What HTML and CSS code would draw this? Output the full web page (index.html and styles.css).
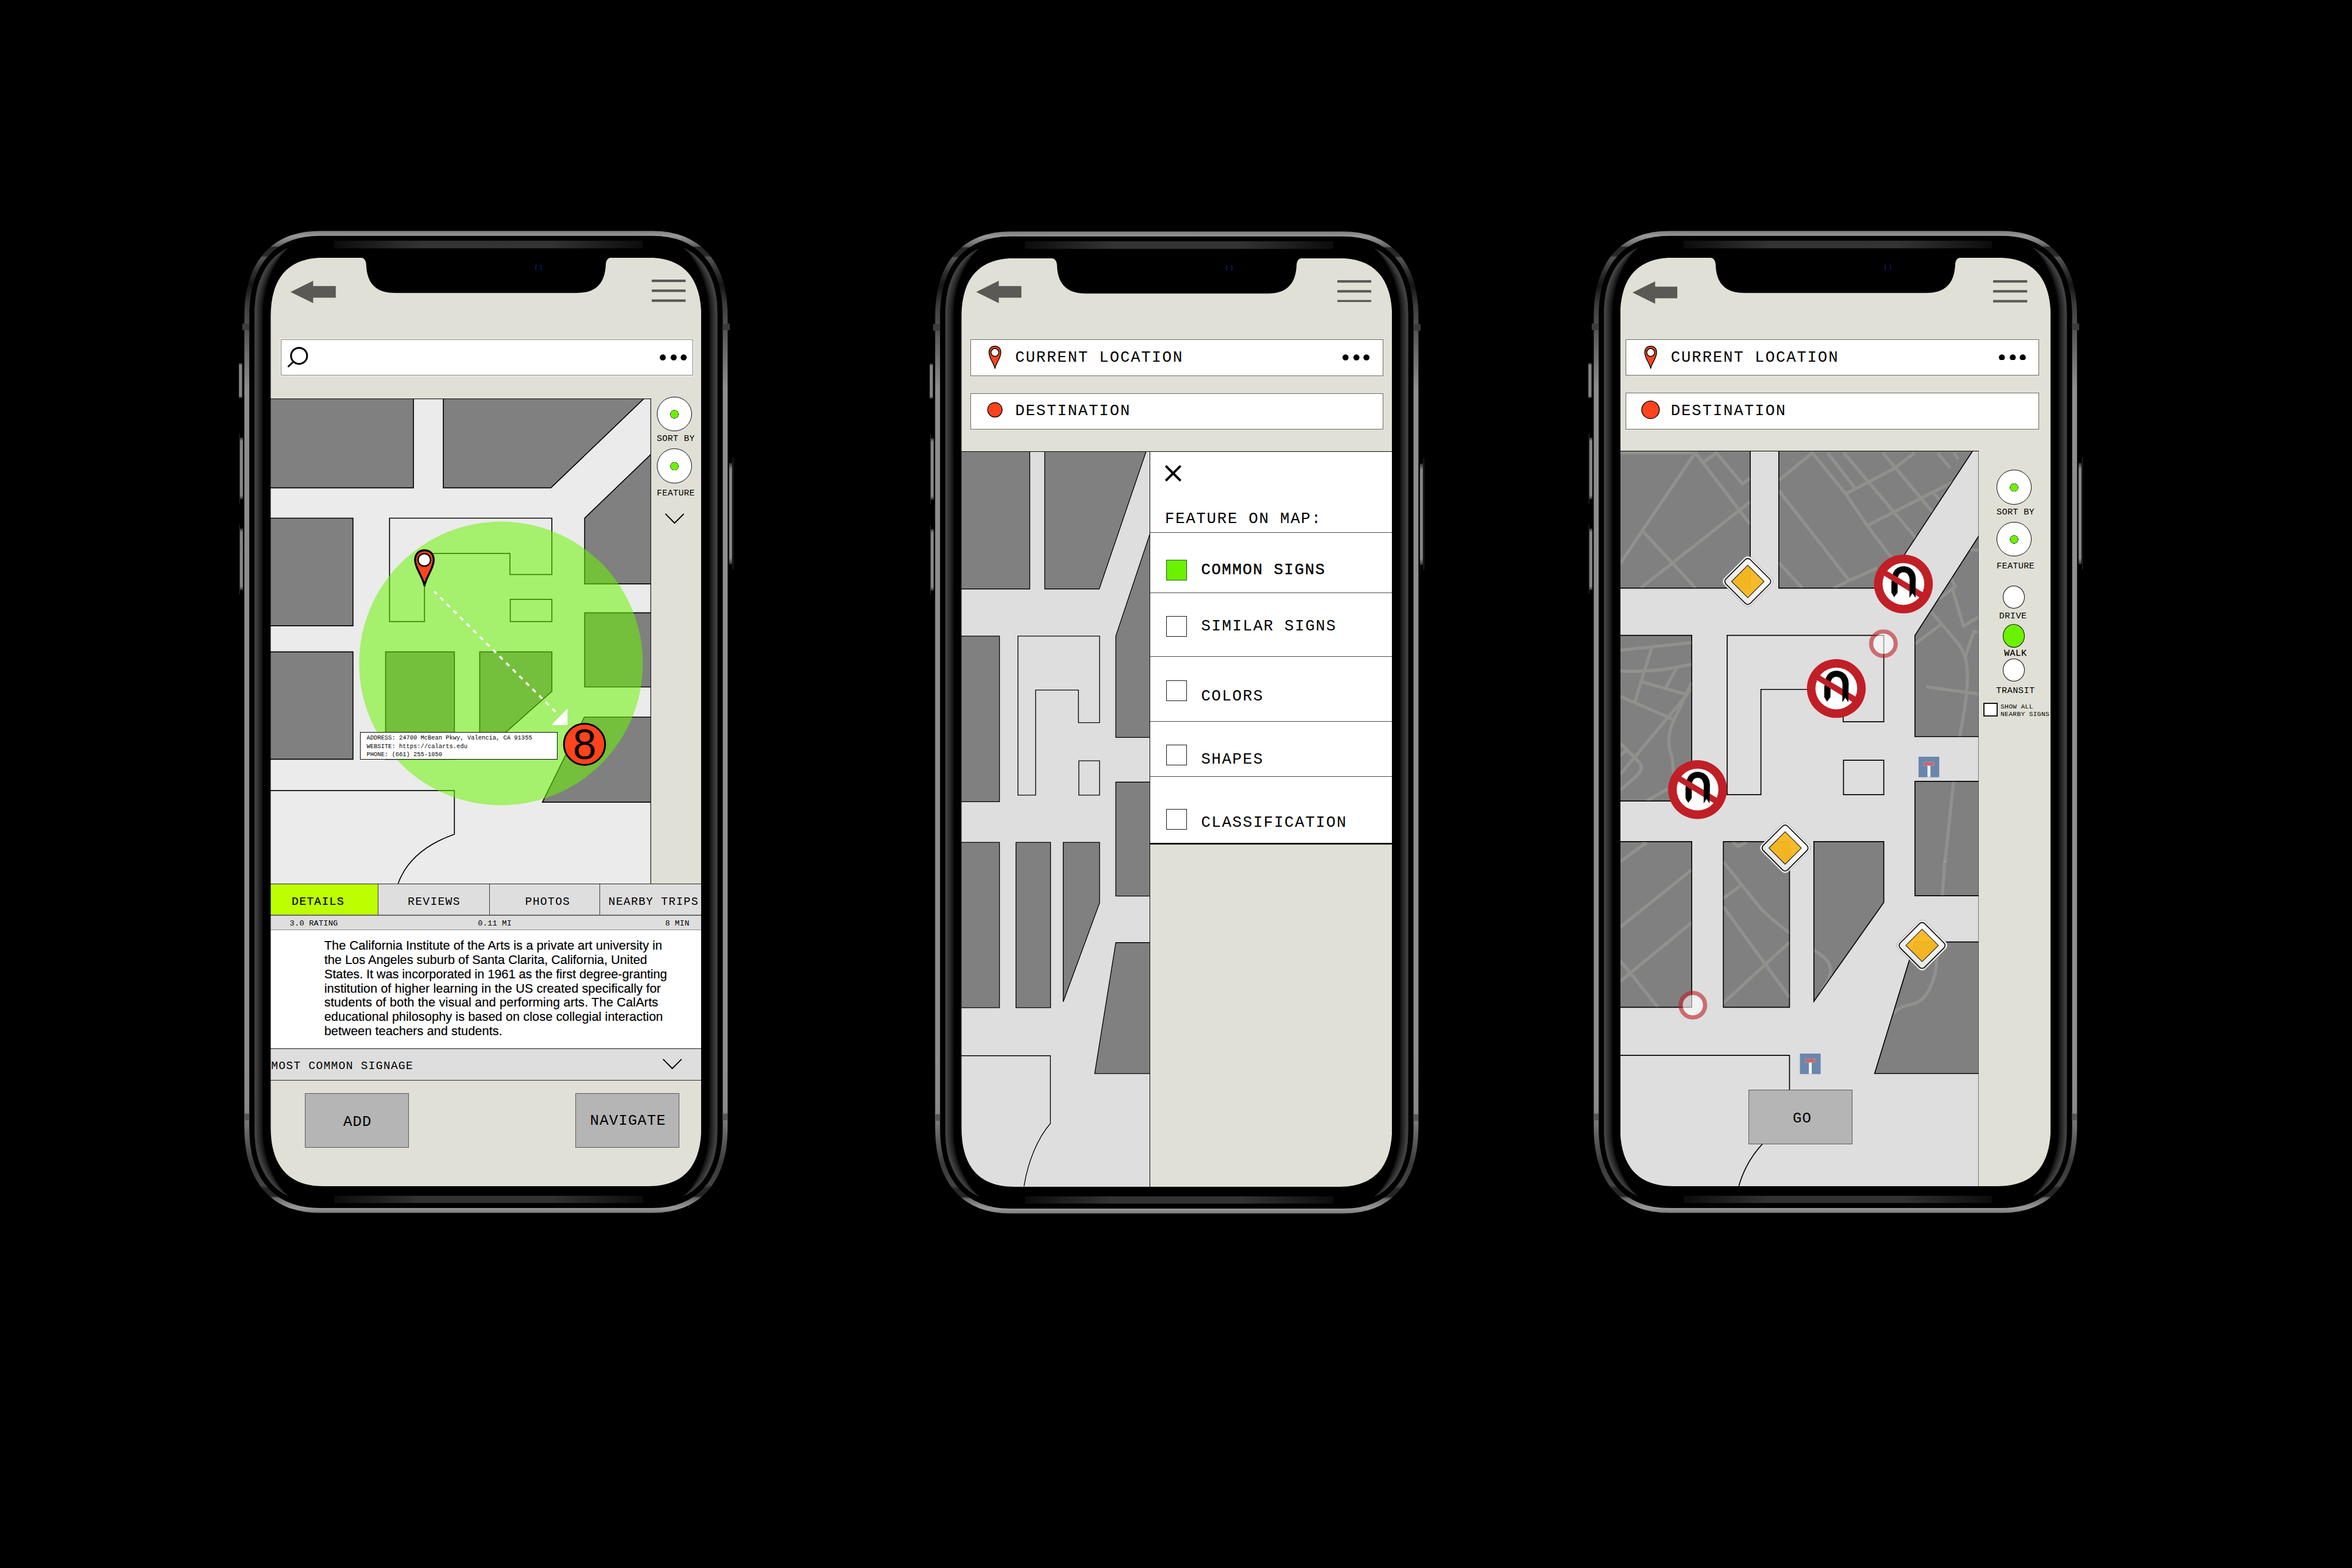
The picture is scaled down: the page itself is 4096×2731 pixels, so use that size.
FILE: index.html
```html
<!DOCTYPE html>
<html lang="en">
<head>
<meta charset="utf-8">
<title>Sign navigation app</title>
<link rel="stylesheet" href="styles.css">
</head>
<body>

<svg class="sprite" aria-hidden="true">
  <defs>
    <linearGradient id="g-rim" gradientUnits="userSpaceOnUse" x1="0" y1="-68" x2="0" y2="2437">
      <stop offset="0" stop-color="#7c7c7c"/><stop offset=".005" stop-color="#999"/>
      <stop offset=".012" stop-color="#777"/><stop offset=".0155" stop-color="#5c5c5c"/>
      <stop offset=".0165" stop-color="#262626"/><stop offset=".025" stop-color="#2a2a2a"/>
      <stop offset=".027" stop-color="#555"/><stop offset=".042" stop-color="#2e2e2e"/>
      <stop offset=".055" stop-color="#151515"/><stop offset=".075" stop-color="#3c3c3c"/>
      <stop offset=".16" stop-color="#8e8e8e"/><stop offset=".84" stop-color="#8e8e8e"/>
      <stop offset=".895" stop-color="#8a8a8a"/><stop offset=".93" stop-color="#555"/>
      <stop offset=".95" stop-color="#3a3a3a"/><stop offset=".972" stop-color="#444"/>
      <stop offset=".975" stop-color="#262626"/><stop offset=".983" stop-color="#262626"/>
      <stop offset=".985" stop-color="#6c6c6c"/><stop offset=".995" stop-color="#999"/>
      <stop offset="1" stop-color="#7c7c7c"/>
    </linearGradient>
    <linearGradient id="g-bar"><stop offset="0" stop-color="#0c0c0c"/><stop offset=".28" stop-color="#333"/><stop offset=".7" stop-color="#333"/><stop offset="1" stop-color="#0c0c0c"/></linearGradient>
    <linearGradient id="g-key" x2="0" y2="1"><stop offset="0" stop-color="#333"/><stop offset=".06" stop-color="#858585"/><stop offset=".94" stop-color="#858585"/><stop offset="1" stop-color="#333"/></linearGradient>
    <linearGradient id="g-sign" x2="0" y2="1"><stop offset="0" stop-color="#fff"/><stop offset="1" stop-color="#ececec"/></linearGradient>

    <g id="edge">
      <path fill="#101010" d="M45-25C-10 0-41 60-41 140V2229C-41 2309-10 2369 45 2394C6 2359-20 2289-20 2229V140C-20 80 6 10 45-25Z"/>
      <path fill="#1c1c1c" d="M45-25C-10 0-41 60-41 140V2229C-41 2309-10 2369 45 2394C3 2360-23 2290-23 2229V140C-23 79 3 9 45-25Z"/>
      <path fill="#292929" d="M45-25C-10 0-41 60-41 140V2229C-41 2309-10 2369 45 2394C0 2361-27 2292-27 2229V140C-27 77 0 8 45-25Z"/>
      <path fill="#343434" d="M45-25C-10 0-41 60-41 140V2229C-41 2309-10 2369 45 2394C-3 2362-31 2295-31 2229V140C-31 74-3 7 45-25Z"/>
      <path fill="#404040" d="M45-25C-10 0-41 60-41 140V2229C-41 2309-10 2369 45 2394C-6 2366-35 2300-35 2229V140C-35 69-6 3 45-25Z"/>
    </g>
    <g id="frame">
      <path fill-rule="evenodd" fill="#000" d="M-30-30H1128V2399H-30ZM0 150C0 55 42 0 135 0H228C238 0 243 7 243.600 17C245 62 265 90 318 90H780.400C833 90 853 62 854.800 17C855.400 7 860 0 870 0H963.400C1056 0 1098.400 55 1098.400 150V2219C1098.400 2314 1056 2369 963.400 2369H135C42 2369 0 2314 0 2219Z"/>
      <use href="#edge"/>
      <use href="#edge" transform="translate(1098.400) scale(-1 1)"/>
      <path fill="none" stroke="url(#g-rim)" stroke-width="12.500" d="M-61 150C-61 10 10-62 125-62H973.400C1088-62 1159.400 10 1159.400 150V2219C1159.400 2359 1088 2431 973.400 2431H125C10 2431-61 2359-61 2219Z"/>
      <path fill="url(#g-bar)" d="M162-43.400H949V-24H162ZM162 2393.500H949V2412H162Z"/>
      <path fill="#3c3c3c" d="M-72.500 168H-54.500V185H-72.500ZM1153 168H1171V185H1153Z"/>
      <path fill="#565656" d="M-67.200 2184H-54.500V2201H-67.200ZM1153 2184H1165.600V2201H1153Z"/>
      <g fill="url(#g-key)">
        <path d="M-81 269H-73V358H-81Z"/><path d="M-78.500 459H-71V616H-78.500Z"/><path d="M-78.500 691H-71V848H-78.500Z"/><path d="M1169.500 524H1177V782H1169.500Z"/>
      </g>
      <path fill="#444" d="M-80 449h1.200V626h-1.200ZM-80 681h1.200V858h-1.200ZM1179 510h1.200V795h-1.200Z"/>
      <path fill="none" stroke="#02206b" stroke-width="2.500" d="M678 18Q674 24 677 31M688 18Q692 24 689 31"/>
    </g>

    <g id="i-arrow" fill="#5a5955"><path d="M0 28.500L57.700 0V13.500H115.400V43.200H57.700V57Z"/></g>
    <g id="i-menu" fill="#5a5955"><path d="M0 0H87V6.200H0ZM0 25.200H87V31.400H0ZM0 50.400H87V56.600H0Z"/></g>
    <g id="i-dots"><circle cx="7.700" cy="8" r="7.700"/><circle cx="35.500" cy="8" r="7.700"/><circle cx="61" cy="8" r="7.700"/></g>
    <g id="i-pin"><path fill="#ff431d" stroke="#000" stroke-width="2.200" stroke-linejoin="round" d="M17 58C14 44 2 32 2 17.500C2 7 8 1.500 17 1.500S32 7 32 17.500C32 32 20 44 17 58Z"/><circle cx="17" cy="17.500" r="10" fill="#fff" stroke="#000" stroke-width="2.200"/></g>
    <g id="i-chevron"><path fill="none" stroke="#000" stroke-width="3" stroke-linecap="round" d="M2 2L24.500 25L47.500 2"/></g>

    <g id="s-uturn">
      <circle r="75" fill="#c01f26"/><circle r="53.300" fill="#fff"/>
      <path d="M-30.700 22.300V-5C-29-10-28-14-28-20C-26-36-14-45.300 0-45.300C19-45.300 31.300-31 31.300-14L30.500 34.700L23 23.300L15.600 34.700L16-8C16-20 11-30 0-30C-9-30-14.500-22-14.500-12L-15 22.300L-23.700 33.700Z"/>
      <path fill="#c01f26" d="M-43-34L51 22L43 35.600L-51-22Z"/>
      <path d="M31.300-14L30.500 34.700L23 23.300L15.600 34.700L16-8Z"/>
    </g>
    <g id="s-priority" opacity=".95">
      <rect x="-49" y="-49" width="98" height="98" rx="12" transform="rotate(45)" fill="url(#g-sign)" stroke="#888" stroke-width="1"/>
      <rect x="-44" y="-44" width="88" height="88" rx="9" transform="rotate(45)" fill="none" stroke="#111" stroke-width="2.800"/>
      <path d="M0-41.500L41.500 0L0 41.500L-41.500 0Z" fill="#f9b91f" stroke="#222" stroke-width="1.800"/>
    </g>
    <g id="s-ring"><circle r="26" fill="#fff" fill-opacity=".6"/><circle r="31.300" fill="none" stroke="#c01f26" stroke-opacity=".6" stroke-width="10.600"/></g>
    <g id="s-deadend"><path fill="#6987ad" d="M0 0H52.800V52.600H0Z"/><path fill="#f1f3f6" d="M22.700 22H30.200V52H22.700Z"/><path fill="#cc666c" stroke="#a9a0b4" stroke-width="1" d="M13.600 13.400H40V22.800H13.600Z"/></g>
  </defs>
</svg>

<main class="board">

  <section class="phone">
    <header class="topbar">
      <svg class="ic-arrow" viewBox="0 0 115.400 57"><use href="#i-arrow"/></svg>
      <svg class="ic-menu" viewBox="0 0 87 56.600"><use href="#i-menu"/></svg>
    </header>
    <div class="search">
      <svg class="ic-search" viewBox="0 0 54 54"><circle cx="30.500" cy="23.200" r="20.500" fill="none" stroke="#000" stroke-width="4.600"/><path d="M15.500 38.500L3.500 50" stroke="#000" stroke-width="4.400" stroke-linecap="round"/></svg>
      <svg class="ic-dots" viewBox="0 0 69 16"><use href="#i-dots"/></svg>
    </div>
    <div class="explore">
      <div class="map-area">
        <svg class="map map-place" viewBox="0 358.600 971 1237.400">
          <g class="blocks">
            <path d="M-5 350H364.700V586.600H-5ZM441 350H962.300L953.300 358.600L715.400 586.600H441ZM980 492L801.600 664V831.600H980ZM-5 664H210.500V938.500H-5ZM-5 1005.300H210.500V1279H-5ZM293.800 1005.300H469.200V1279H293.800ZM533.800 1005.300H717.900V1106L601.800 1209L533.800 1269ZM801.600 905.400H980V1094.700H801.600ZM800.800 1171.600H980V1388.500H693.800Z"/>
          </g>
          <g class="lots">
            <path d="M303.800 664H717.900V807.900H610.900V753.800H392.900V927.900H303.800ZM611.700 871H717.900V927.900H611.700Z"/>
            <path d="M-5 1359H469.200V1470.400C400 1495 348 1535 325.700 1596"/>
          </g>
          <path fill="none" stroke="#222" stroke-width="2" d="M0 359.400H970.300V1596"/>
          <circle cx="588.100" cy="1034.700" r="361.900" fill="#69f401" fill-opacity=".54"/>
          <path d="M417.800 851L735 1166" stroke="#fff" stroke-width="5.500" stroke-dasharray="11 12.700" stroke-dashoffset="2"/>
          <path fill="#fff" d="M757.700 1149.700V1192H716.200Z"/>
          <path fill="#ff431d" stroke="#000" stroke-width="5" stroke-linejoin="round" d="M392.900 836C388 812 369 792 369 771C369 754 380 746 392.900 746S416.500 754 416.500 771C416.500 792 398 812 392.900 836Z"/>
          <circle cx="392.500" cy="770.400" r="16" fill="#fff" stroke="#000" stroke-width="3.500"/>
          <circle cx="801.200" cy="1241" r="52.500" fill="#ff431d" stroke="#000" stroke-width="4.500"/>
          <text class="badge-number" x="801.600" y="1279">8</text>
        </svg>
        <div class="place-card">ADDRESS: 24700 McBean Pkwy, Valencia, CA 91355<br>WEBSITE: https://calarts.edu<br>PHONE: (661) 255-1050</div>
      </div>
      <aside class="rail rail-place">
        <i class="knob"></i><span class="rail-label">SORT BY</span>
        <i class="knob"></i><span class="rail-label">FEATURE</span>
        <svg class="ic-chevron" viewBox="0 0 49.500 27"><use href="#i-chevron"/></svg>
      </aside>
    </div>
    <nav class="tabs">
      <a class="tab tab-active">DETAILS</a><a class="tab tab-reviews">REVIEWS</a><a class="tab tab-photos">PHOTOS</a><a class="tab tab-trips">NEARBY TRIPS</a>
    </nav>
    <div class="meta"><span>3.0 RATING</span><span>0.11 MI</span><span>8 MIN</span></div>
    <p class="about">
      <span>The California Institute of the Arts is a private art university in</span>
      <span class="snug">the Los Angeles suburb of Santa Clarita, California, United</span>
      <span class="tight">States. It was incorporated in 1961 as the first degree-granting</span>
      <span>institution of higher learning in the US created specifically for</span>
      <span class="loose">students of both the visual and performing arts. The CalArts</span>
      <span>educational philosophy is based on close collegial interaction</span>
      <span>between teachers and students.</span>
    </p>
    <div class="signage">MOST COMMON SIGNAGE<svg class="ic-chevron" viewBox="0 0 49.500 27"><use href="#i-chevron"/></svg></div>
    <div class="actions"><button class="btn">ADD</button><button class="btn btn-nav">NAVIGATE</button></div>
    <svg class="frame" viewBox="-90 -70 1280 2510"><use href="#frame"/></svg>
  </section>

  <section class="phone phone-filter">
    <header class="topbar">
      <svg class="ic-arrow" viewBox="0 0 115.400 57"><use href="#i-arrow"/></svg>
      <svg class="ic-menu" viewBox="0 0 87 56.600"><use href="#i-menu"/></svg>
    </header>
    <div class="field"><svg class="field-icon" viewBox="0 0 40 60"><use href="#i-pin" x="3"/></svg>CURRENT LOCATION<svg class="ic-dots" viewBox="0 0 69 16"><use href="#i-dots"/></svg></div>
    <div class="field"><svg class="field-icon" viewBox="0 0 40 60"><circle cx="20" cy="27.500" r="18.400" fill="#ff431d" stroke="#000" stroke-width="2"/></svg>DESTINATION</div>
    <div class="filter-body">
      <svg class="map map-filter" viewBox="0 492 480 1877">
        <g class="blocks">
          <path d="M-5 480H174.800V842.200H-5ZM213 480H475.700L352.200 842.200H213ZM485 691.500L394.500 962.700V1221.600H485ZM-5 962.700H97.300V1385.800H-5ZM394.500 1335.800H485V1626.800H394.500ZM-5 1489.600H97.300V1912H-5ZM139.600 1489.600H227.800V1912H139.600ZM260.200 1489.600H353V1644.500L260.200 1896.800ZM394.500 1745.700H485V2080.400H340.600Z"/>
        </g>
        <g class="lots">
          <path d="M144.500 962.700H353V1183.700H299V1100.500H189.700V1369H144.500ZM300 1281.300H353V1369H300Z"/>
          <path d="M-5 2034.700H227.400V2207.700C195 2245 170 2305 159.900 2369"/>
        </g>
      </svg>
      <div class="filter-panel">
        <div class="filter-head">
          <svg class="ic-close" viewBox="0 0 50 50"><path d="M4 4L46 46M46 4L4 46" stroke="#000" stroke-width="6.500"/></svg>
          <h2>FEATURE ON MAP:</h2>
        </div>
        <label class="option option-on"><i class="box"></i><span>COMMON SIGNS</span></label>
        <label class="option option-similar"><i class="box"></i><span>SIMILAR SIGNS</span></label>
        <label class="option option-colors"><i class="box"></i><span>COLORS</span></label>
        <label class="option option-shapes"><i class="box"></i><span>SHAPES</span></label>
        <label class="option option-class"><i class="box"></i><span>CLASSIFICATION</span></label>
      </div>
    </div>
    <svg class="frame" viewBox="-90 -70 1280 2510"><use href="#frame"/></svg>
  </section>

  <section class="phone phone-route">
    <header class="topbar">
      <svg class="ic-arrow" viewBox="0 0 115.400 57"><use href="#i-arrow"/></svg>
      <svg class="ic-menu" viewBox="0 0 87 56.600"><use href="#i-menu"/></svg>
    </header>
    <div class="field"><svg class="field-icon" viewBox="0 0 40 60"><use href="#i-pin" x="3"/></svg>CURRENT LOCATION<svg class="ic-dots" viewBox="0 0 69 16"><use href="#i-dots"/></svg></div>
    <div class="field"><svg class="field-icon field-icon-wide" viewBox="0 0 48 60"><circle cx="24" cy="27.500" r="22.500" fill="#ff431d" stroke="#000" stroke-width="2"/></svg>DESTINATION</div>
    <div class="route-body">
      <div class="map-area">
        <svg class="map map-route" viewBox="0 493 915 1876">
          <defs>
            <path id="city" d="M-5 493H331V843.600H-5ZM404 493H898.900L725.700 756.500L668.500 843.600H404ZM920 701.500L751.300 964.200V1222.500H920ZM-5 964.200H181.800V1386.600H-5ZM751.300 1336.700H920V1628.400H751.300ZM-5 1490.500H181.800V1913H-5ZM262.600 1490.500H431.300V1913H262.600ZM493.500 1490.500H671.800V1645.500L493.500 1897.800ZM751.300 1746.400H920V2082H648.500Z"/>
            <clipPath id="city-clip"><use href="#city"/></clipPath>
          </defs>
          <g class="blocks"><use href="#city"/></g>
          <g clip-path="url(#city-clip)" class="roads">
            <g transform="translate(-103.400 -88.400) scale(.829 .574)">
              <path d="M124 1022H355L192 1368L124 1515M192 1368L356 1624M355 1022L524 1340M524 1240L187 1623M377 1068L420 1022L500 1160L524 1135"/>
              <path d="M612 1145L715 1022L818 1205L885 1348L965 1500M818 1205L970 1090L1030 1022M762 1022L848 1182M812 1022L1045 1420M932 1022L1085 1285M885 1345L1150 1150M1100 1022L1140 1090M1085 1195L1105 1230M1150 1022L1165 1050M612 1190L829 1590L915 1535M829 1590L780 1624M612 1510L685 1624"/>
            </g>
            <g transform="translate(-103.400 641.600) scale(.829 .574)">
              <path d="M124 628L344 594M222 612L169 858M124 720Q230 730 344 690M297 708L265 793M189 768L330 825M124 833L290 937M344 770L290 937Q260 1020 285 1110L288 1180M344 800L124 1180M124 1040L185 1130Q200 1160 160 1205L124 1250M145 1070L124 1095M205 1298L270 1245"/>
              <path d="M1140 300L1155 345L1105 400M1145 350L1180 520L1228 480M1228 548L1212 545L1185 660M1083 460L1165 600Q1190 650 1192 720Q1195 830 1168 1012M1110 515L1031 600M1065 790L1228 823M1190 178L1228 184M1150 1211L1123 1572M124 1568L205 1482M193 1478L203 1497M470 1480L486 1500L515 1480"/>
            </g>
            <g transform="translate(-103.400 1541.600) scale(.829 .5868)">
              <path d="M1123-5L1115 148M344 35L124 285M344 265L124 520M124 430L240 633M441 0L560 210Q590 250 645 310M493 105L441 160M441 195L645 590M645 350L441 615M720 385Q790 440 765 510L740 570M1098 400Q1100 480 1080 540Q1060 610 1020 620Q980 630 966 660"/>
            </g>
          </g>
          <g class="lots">
            <path d="M272.200 964.200H671.800V1184.600H568.100V1102H358.400V1370.600H272.200ZM569 1282.800H671.800V1370.600H569Z"/>
            <path d="M-5 2035.600H431.300V2208.700C375 2240 325 2290 302 2369"/>
          </g>
          <path fill="none" stroke="#222" stroke-width="1.800" d="M0 493.900H914.200V2369"/>
          <use href="#s-ring" x="670.900" y="985.400"/><use href="#s-ring" x="184.700" y="1907.700"/>
          <use href="#s-priority" x="324.900" y="826.600"/><use href="#s-priority" x="420.100" y="1506.600"/><use href="#s-priority" x="769.600" y="1755.200"/>
          <use href="#s-uturn" x="721.900" y="833"/><use href="#s-uturn" x="550.700" y="1099.600"/><use href="#s-uturn" x="196.700" y="1357.600"/>
          <use href="#s-deadend" x="760.500" y="1273.600"/><use href="#s-deadend" x="457.900" y="2031"/>
        </svg>
        <button class="btn btn-go">GO</button>
      </div>
      <aside class="rail rail-route">
        <i class="knob"></i><span class="rail-label">SORT BY</span>
        <i class="knob"></i><span class="rail-label">FEATURE</span>
        <i class="mode mode-drive"></i><span class="rail-label label-drive">DRIVE</span>
        <i class="mode mode-walk"></i><span class="rail-label label-walk">WALK</span>
        <i class="mode mode-transit"></i><span class="rail-label label-transit">TRANSIT</span>
        <label class="nearby"><i class="nearby-box"></i><span>SHOW ALL<br>NEARBY SIGNS</span></label>
      </aside>
    </div>
    <svg class="frame" viewBox="-90 -70 1280 2510"><use href="#frame"/></svg>
  </section>

</main>
</body>
</html>
```
FILE: styles.css
```css
/* 1rem equals 100 units of the artboard grid */
html { font-size: 68.2667px; }
* { box-sizing: border-box; }
body {
  margin: 0;
  background: #000;
  color: #000;
  overflow: hidden;
  font-family: "Liberation Mono", "Courier New", monospace;
}
svg { display: block; flex: none; }
.sprite { position: absolute; width: 0; height: 0; }

.board {
  width: 60rem;
  height: 40rem;
  padding: 6.58rem 0 0 6.902rem;
  display: flex;
  align-items: flex-start;
}
.phone {
  position: relative;
  flex: none;
  width: 10.984rem;
  height: 23.69rem;
  display: flex;
  flex-direction: column;
  background: #e0e0d6;
}
.phone-filter { margin: .01rem 0 0 6.642rem; }
.phone-route { margin-left: 5.82rem; }
.frame {
  position: absolute;
  left: -.9rem;
  top: -.7rem;
  width: 12.8rem;
  height: 25.1rem;
}

/* header */
.topbar {
  flex: none;
  height: 2.073rem;
  padding: .585rem .39rem 0 .513rem;
  display: flex;
  justify-content: space-between;
  align-items: flex-start;
}
.phone-filter .topbar { padding: .58rem .524rem 0 .375rem; }
.phone-route .topbar { height: 2.078rem; padding: .592rem .594rem 0 .31rem; }
.ic-arrow { width: 1.154rem; height: .57rem; }
.ic-menu { width: .87rem; height: .566rem; margin-top: -.025rem; }
.ic-dots { width: .69rem; height: .16rem; margin-left: auto; }

.search {
  flex: none;
  height: .92rem;
  margin: 0 .207rem .593rem .26rem;
  padding: 0 .15rem 0 .15rem;
  display: flex;
  align-items: center;
  background: #fff;
  border: .015rem solid #777;
  outline: .01rem solid #fff;
}
.ic-search { width: .54rem; height: .54rem; }

.field {
  flex: none;
  height: .928rem;
  margin: 0 .224rem .438rem .222rem;
  padding: 0 .33rem .02rem .415rem;
  display: flex;
  align-items: center;
  background: #fff;
  border: .024rem solid #686863;
  font-size: .4rem;
  letter-spacing: .028rem;
}
.phone-route .field { margin: 0 .295rem .438rem .143rem; }
.phone-route .field + .field { margin-bottom: .444rem; }
.field-icon { width: .4rem; height: .6rem; margin-right: .32rem; }
.field-icon-wide { width: .48rem; margin: 0 .28rem 0 -.04rem; }

/* maps */
.map-area { position: relative; flex: none; }
.map { background: #dedede; }
.map-place { width: 9.71rem; height: 12.374rem; background: #ebebeb; }
.map-filter { width: 4.8rem; height: 18.77rem; }
.map-route { width: 9.15rem; height: 18.76rem; }
.blocks { fill: #808080; stroke: #000; stroke-width: 2.5; }
.map-filter .blocks, .map-filter .lots { stroke-width: 2; }
.lots { fill: none; stroke: #000; stroke-width: 2.5; }
.roads path {
  fill: none;
  stroke: #fffde8;
  stroke-opacity: .13;
  stroke-width: 5.6;
  vector-effect: non-scaling-stroke;
}
.badge-number { font: 108px "Liberation Sans", Arial, sans-serif; text-anchor: middle; }

.explore { display: flex; flex: none; height: 12.374rem; }
.place-card {
  position: absolute;
  left: 2.287rem;
  top: 8.504rem;
  width: 5.03rem;
  height: .71rem;
  padding: .04rem 0 0 .15rem;
  background: #fff;
  border: .014rem solid #000;
  font-size: .153rem;
  line-height: .21rem;
  white-space: nowrap;
}

/* side rail */
.rail { flex: 1; display: flex; flex-direction: column; align-items: center; }
.rail-place { padding-right: .09rem; margin-top: -.048rem; }
.rail-route { padding: .48rem .04rem 0 0; }
.knob {
  flex: none;
  width: .89rem;
  height: .89rem;
  border: .02rem solid #000;
  border-radius: 50%;
  background: radial-gradient(circle at 50% 51%, #6bf200 0 .096rem, #222 .1rem .104rem, #fff .11rem);
}
.rail-label {
  flex: none;
  font-size: .225rem;
  line-height: .24rem;
  letter-spacing: .003rem;
  white-space: nowrap;
  padding-left: .07rem;
  margin: .07rem 0 .127rem;
}
.knob ~ .knob + .rail-label { margin: .125rem 0 0; }
.ic-chevron { width: .495rem; height: .27rem; }
.rail .ic-chevron { margin-top: .395rem; }
.mode { flex: none; width: .565rem; height: .58rem; margin-right: .02rem; border: .02rem solid #000; border-radius: 50%; background: #fff; }
.mode-drive { margin-top: .377rem; }
.mode-walk { height: .605rem; background: #6bf200; }
.rail-route .label-drive { margin: .075rem 0 .08rem; padding: 0 .06rem 0 0; letter-spacing: .006rem; }
.rail-route .label-walk { margin: .03rem 0 .013rem; -webkit-text-stroke: .004rem #000; letter-spacing: .01rem; }
.rail-route .label-transit { margin: .125rem 0 .183rem; letter-spacing: .006rem; }
.nearby { align-self: stretch; display: flex; padding-left: .115rem; }
.nearby-box { flex: none; width: .36rem; height: .35rem; margin-right: .08rem; background: #fff; border: .03rem solid #111; }
.nearby span { font-size: .165rem; line-height: .197rem; letter-spacing: .005rem; white-space: nowrap; margin-top: .003rem; }

/* place details */
.tabs {
  flex: none;
  height: .82rem;
  display: grid;
  grid-template-columns: 2.752rem 2.843rem 2.811rem 1fr;
  border-top: .015rem solid #222;
  border-bottom: .03rem solid #666;
  background: #dedede;
  font-size: .29rem;
  letter-spacing: .018rem;
}
.tab { display: flex; align-items: center; padding-top: .135rem; border-right: .014rem solid #333; white-space: nowrap; }
.tab:last-child { border-right: 0; }
.tab-active { padding-left: .54rem; background: #bdff00; -webkit-text-stroke: .003rem #000; }
.tab-reviews { padding-left: .748rem; }
.tab-photos { padding-left: .9rem; }
.tab-trips { padding-left: .214rem; }
.meta {
  flex: none;
  height: .365rem;
  display: grid;
  grid-template-columns: 5.29rem 1fr auto;
  align-items: center;
  padding: .07rem .3rem 0 0;
  background: #dedede;
  border-bottom: .025rem solid #888;
  font-size: .2rem;
  letter-spacing: .003rem;
}
.meta span:first-child { padding-left: .49rem; }
.about {
  flex: none;
  height: 3.02rem;
  margin: 0;
  padding: .232rem 0 0 1.37rem;
  background: #fff;
  font-family: "Liberation Sans", Arial, sans-serif;
  font-size: .32rem;
  line-height: .362rem;
  letter-spacing: .0003rem;
  white-space: nowrap;
  -webkit-text-stroke: .003rem #000;
}
.about span { display: block; }
.about .snug { letter-spacing: -.0005rem; }
.about .tight { letter-spacing: -.0014rem; }
.about .loose { letter-spacing: .0014rem; }
.signage {
  flex: none;
  height: .83rem;
  padding: .085rem .49rem 0 .015rem;
  display: flex;
  align-items: center;
  justify-content: space-between;
  background: #dedede;
  border-top: .018rem solid #111;
  border-bottom: .024rem solid #222;
  font-size: .29rem;
  letter-spacing: .017rem;
}
.signage .ic-chevron { margin-top: -.1rem; }
.actions { display: flex; justify-content: space-between; padding: .315rem .555rem 0 .878rem; }
.btn {
  width: 2.65rem;
  height: 1.39rem;
  padding: .09rem 0 0 .03rem;
  background: #b5b5b5;
  border: .02rem solid #555;
  color: #000;
  font: .38rem "Liberation Mono", "Courier New", monospace;
  letter-spacing: .014rem;
}
.btn-nav { padding-top: .03rem; }
.btn-go { position: absolute; left: 3.277rem; top: 16.3rem; padding: .06rem 0 0 .08rem; }

/* filter panel */
.filter-body { flex: none; height: 18.77rem; margin-top: .115rem; display: flex; border-top: .025rem solid #000; }
.filter-body .map { height: 18.745rem; }
.filter-panel { flex: 1; border-left: .022rem solid #000; }
.filter-panel > * { background: #fff; border-bottom: .015rem solid #444; }
.filter-head { height: 2.076rem; padding: .325rem 0 0 .345rem; }
.ic-close { width: .47rem; height: .45rem; }
.filter-head h2 {
  margin: .685rem 0 0 .03rem;
  font-size: .4rem;
  font-weight: 400;
  line-height: .52rem;
  letter-spacing: .027rem;
}
.option {
  display: flex;
  height: 1.538rem;
  padding: .68rem 0 0 .412rem;
  font-size: .4rem;
  line-height: .52rem;
  letter-spacing: .026rem;
}
.box { flex: none; width: .53rem; height: .53rem; margin-right: .355rem; border: .018rem solid #111; background: #fff; }
.option-on .box { background: #6bf200; border-color: #1c5a00; }
.option-on span { -webkit-text-stroke: .006rem #000; letter-spacing: .025rem; }
.option-similar { height: 1.624rem; padding-top: .575rem; }
.option-colors { height: 1.648rem; padding-top: .592rem; }
.option-colors span { margin-top: .15rem; }
.option-shapes { height: 1.406rem; padding-top: .587rem; }
.option-shapes span { margin-top: .115rem; }
.option-class { height: 1.736rem; padding-top: .822rem; border-bottom: .045rem solid #111; }
.option-class span { margin-top: .085rem; }

.route-body { flex: none; display: flex; height: 18.76rem; margin-top: .11rem; }
```
